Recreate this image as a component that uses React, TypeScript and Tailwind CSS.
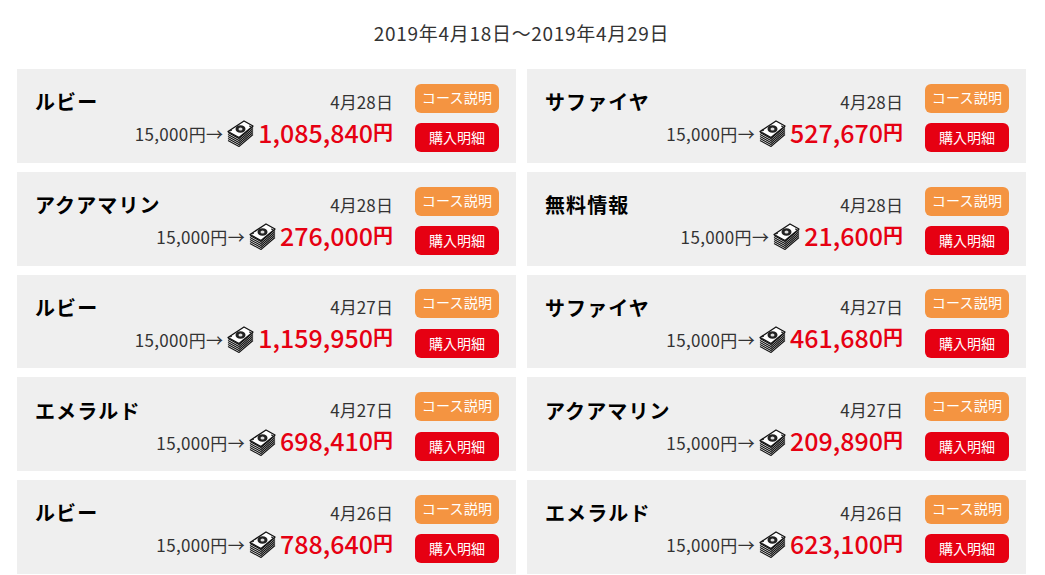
const font = { fontFamily: '"Noto Sans CJK JP", sans-serif' };

function Money() {
  return (
    <svg viewBox="0 0 27 27" className="w-[27px] h-[27px] shrink-0" aria-hidden="true">
      <path d="M1 13L12 20L26 7V14L12 26.5L1 19.5Z" fill="#fff" />
      {[0, 2, 4, 6, 8].map((d) => (
        <path key={d} d={`M1 ${12.5 + d}L12 ${18.5 + d}L26 ${6.5 + d}`} fill="none" stroke="#111" strokeWidth="1.1" />
      ))}
      <path d="M1 11.5L17 1L26 6L12 17.5Z" fill="#fff" stroke="#111" strokeWidth="1.3" strokeLinejoin="round" />
      <ellipse cx="13.5" cy="9" rx="5" ry="3.8" fill="#222" />
      <ellipse cx="13.5" cy="9" rx="2" ry="1.5" fill="#ddd" />
      <path d="M3 11L5 10M22 6L24 6.5" stroke="#111" strokeWidth="1" />
    </svg>
  );
}

type Item = { name: string; date: string; price: string };

const items: Item[] = [
  { name: "ルビー", date: "4月28日", price: "1,085,840" },
  { name: "サファイヤ", date: "4月28日", price: "527,670" },
  { name: "アクアマリン", date: "4月28日", price: "276,000" },
  { name: "無料情報", date: "4月28日", price: "21,600" },
  { name: "ルビー", date: "4月27日", price: "1,159,950" },
  { name: "サファイヤ", date: "4月27日", price: "461,680" },
  { name: "エメラルド", date: "4月27日", price: "698,410" },
  { name: "アクアマリン", date: "4月27日", price: "209,890" },
  { name: "ルビー", date: "4月26日", price: "788,640" },
  { name: "エメラルド", date: "4月26日", price: "623,100" },
];

function Card({ item }: { item: Item }) {
  return (
    <div className="h-[93.75px] bg-[#efefef] flex items-start pl-[18px] pr-[17px] pt-[14.75px]">
      <div className="flex-1 min-w-0">
        <div className="flex items-center justify-between h-[36px]">
          <span className="text-[20px] leading-[30px] pt-[1px] font-bold tracking-[1.1px] text-black">{item.name}</span>
          <span className="text-[17px] leading-[24px] text-[#333] tracking-[0.1px]">{item.date}</span>
        </div>
        <div className="flex items-center justify-end h-[28px] text-[#333]">
          <span className="text-[17px] leading-[24px] pt-[1px] tracking-[0.35px]">15,000円→</span>
          <span className="ml-[4px] mr-[4px]"><Money /></span>
          <span className="text-[25px] leading-[28px] pb-[4px] font-medium text-[#e60012]">{item.price}</span>
          <span className="text-[20px] leading-[28px] pb-[4px] font-bold text-[#e60012]">円</span>
        </div>
      </div>
      <div className="w-[84px] ml-[22px] shrink-0 flex flex-col gap-[10.5px]">
        <div className="h-[29px] rounded-[6px] bg-[#f49441] text-white text-[14px] leading-[26px] text-center tracking-[0.2px]">コース説明</div>
        <div className="h-[29px] rounded-[6px] bg-[#e60012] text-white text-[14px] leading-[29px] text-center">購入明細</div>
      </div>
    </div>
  );
}

export default function App() {
  return (
    <div className="w-[1045px] h-[575px] overflow-hidden bg-white" style={font}>
      <h1 className="h-[69px] pt-[19px] pr-[2px] text-center text-[19px] leading-[28px] font-normal text-[#333] tracking-[0.7px]">
        2019年4月18日～2019年4月29日
      </h1>
      <div className="grid grid-cols-[499px_499px] gap-x-[11px] gap-y-[9px] pl-[17px]">
        {items.map((it, i) => (
          <Card key={i} item={it} />
        ))}
      </div>
    </div>
  );
}
